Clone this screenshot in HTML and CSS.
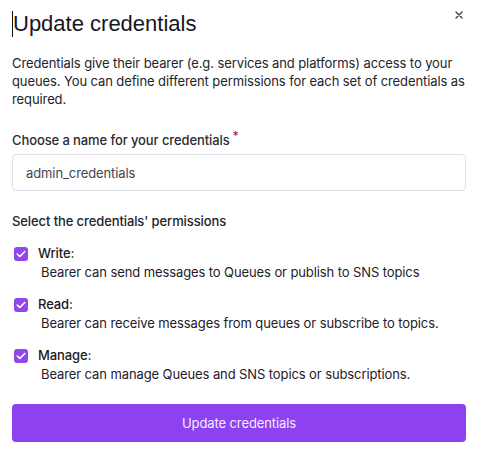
FILE: index.html
```html
<!DOCTYPE html>
<html>
<head>
<meta charset="utf-8">
<link rel="stylesheet" href="styles.css">
</head>
<body>
<div class="modal">
  <div class="header">
    <h1 class="title"><span class="caret"></span>Update credentials</h1>
    <button class="close" aria-label="Close">
      <svg width="8" height="8" viewBox="0 0 8 8"><path d="M1 1L7 7M7 1L1 7" stroke="#3a3f4b" stroke-width="1.4" stroke-linecap="round"/></svg>
    </button>
  </div>
  <p class="desc">Credentials give their bearer (e.g. services and platforms) access to your queues. You can define different permissions for each set of credentials as required.</p>
  <label class="label" for="name">Choose a name for your credentials<span class="req">*</span></label>
  <input id="name" class="input" type="text" value="admin_credentials">
  <div class="section-title">Select the credentials' permissions</div>
  <div class="perms">
    <div class="perm">
      <div class="perm-head"><span class="check"><svg width="10" height="8" viewBox="0 0 10 8"><path d="M1.2 4L3.8 6.5L8.8 1.5" fill="none" stroke="#fff" stroke-width="1.6" stroke-linecap="round" stroke-linejoin="round"/></svg></span><span class="perm-name">Write:</span></div>
      <div class="perm-desc">Bearer can send messages to Queues or publish to SNS topics</div>
    </div>
    <div class="perm">
      <div class="perm-head"><span class="check"><svg width="10" height="8" viewBox="0 0 10 8"><path d="M1.2 4L3.8 6.5L8.8 1.5" fill="none" stroke="#fff" stroke-width="1.6" stroke-linecap="round" stroke-linejoin="round"/></svg></span><span class="perm-name">Read:</span></div>
      <div class="perm-desc">Bearer can receive messages from queues or subscribe to topics.</div>
    </div>
    <div class="perm">
      <div class="perm-head"><span class="check"><svg width="10" height="8" viewBox="0 0 10 8"><path d="M1.2 4L3.8 6.5L8.8 1.5" fill="none" stroke="#fff" stroke-width="1.6" stroke-linecap="round" stroke-linejoin="round"/></svg></span><span class="perm-name">Manage:</span></div>
      <div class="perm-desc">Bearer can manage Queues and SNS topics or subscriptions.</div>
    </div>
  </div>
  <button class="submit">Update credentials</button>
</div>
</body>
</html>
```
FILE: styles.css
```css
* { box-sizing: border-box; }
html, body { margin: 0; padding: 0; background: #fff; }
body { font-family: Inter, "Noto Sans", sans-serif; color: #1f2029; letter-spacing: -0.1px; }
.modal { width: 479px; padding: 11px 13px 0 12px; }
.header { display: flex; justify-content: space-between; align-items: flex-start; }
.title {
  margin: 0;
  font-family: "Liberation Sans", Arial, sans-serif; font-weight: 400;
  font-size: 22px; line-height: 26px; letter-spacing: 0; color: #16171d;
}
.caret { display: inline-block; width: 1px; height: 26px; background: #111; vertical-align: top; }
.close { border: 0; background: none; padding: 0; margin: -2px 1px 0 0; width: 12px; height: 12px; display: flex; align-items: center; justify-content: center; }
.desc { margin: 17px 0 0; font-size: 13px; line-height: 18px; color: #23242b; }
.label { display: block; margin-top: 23px; font-size: 13px; line-height: 18px; font-weight: 500; color: #2a2b33; }
.req { color: #c2185b; font-size: 12px; position: relative; top: -5px; margin-left: 3px; }
.input {
  display: block; width: 454px; height: 37px; margin-top: 4px;
  border: 1px solid #dfe0e3; border-radius: 4px; padding: 0 13px;
  font-family: Inter, sans-serif; font-size: 13px; letter-spacing: -0.1px; color: #44454d; outline: none;
}
.section-title { margin-top: 21px; font-size: 13px; line-height: 18px; font-weight: 500; color: #23242b; }
.perms { margin-top: 15px; display: flex; flex-direction: column; gap: 15px; }
.perm-head { display: flex; align-items: center; gap: 10px; padding-left: 2px; }
.check { width: 14px; height: 14px; border-radius: 3px; background: #9147ea; display: flex; align-items: center; justify-content: center; }
.perm-name { font-size: 13px; line-height: 17px; font-weight: 500; color: #1b1c22; }
.perm-desc { margin-top: 2px; padding-left: 29px; font-size: 13px; line-height: 17px; color: #1f2029; }
.submit {
  display: block; width: 454px; height: 38px; margin-top: 21px;
  border: 0; border-radius: 4px; background: #8e41ee; color: #f3ecff;
  font-family: Inter, sans-serif; font-size: 13px; letter-spacing: -0.1px;
}
```
